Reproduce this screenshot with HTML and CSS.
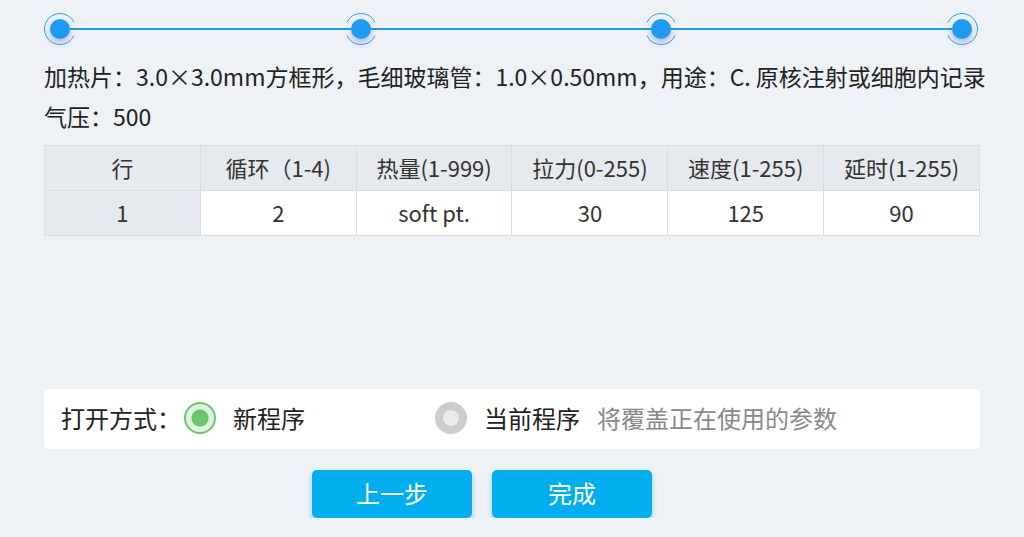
FILE: index.html
```html
<!DOCTYPE html>
<html lang="zh-CN">
<head>
  <meta charset="UTF-8" />
  <title>拉制程序</title>
  <link rel="stylesheet" href="styles.css">
</head>
<body>
  <div class="stepper">
    <div class="step">
      <svg class="ring" viewBox="0 0 32 32"><path d="M30.04 22.55 A15.5 15.5 0 1 1 30.04 9.45" /></svg>
    </div>
    <div class="bar"></div>
    <div class="step">
      <svg class="ring" viewBox="0 0 32 32"><path d="M1.96 9.45 A15.5 15.5 0 0 1 30.04 9.45" /><path d="M30.04 22.55 A15.5 15.5 0 0 1 1.96 22.55" /></svg>
    </div>
    <div class="bar"></div>
    <div class="step">
      <svg class="ring" viewBox="0 0 32 32"><path d="M1.96 9.45 A15.5 15.5 0 0 1 30.04 9.45" /><path d="M30.04 22.55 A15.5 15.5 0 0 1 1.96 22.55" /></svg>
    </div>
    <div class="bar"></div>
    <div class="step">
      <svg class="ring" viewBox="0 0 32 32"><path d="M1.96 9.45 A15.5 15.5 0 1 1 1.96 22.55" /></svg>
    </div>
  </div>

  <div class="content">
    <p class="desc">加热片：3.0×3.0mm方框形，毛细玻璃管：1.0×0.50mm，用途：C. 原核注射或细胞内记录</p>
    <p class="desc">气压：500</p>

    <table class="params">
      <tr>
        <th>行</th>
        <th>循环（1-4)</th>
        <th>热量(1-999)</th>
        <th>拉力(0-255)</th>
        <th>速度(1-255)</th>
        <th>延时(1-255)</th>
      </tr>
      <tr>
        <td class="row-no">1</td>
        <td>2</td>
        <td>soft pt.</td>
        <td>30</td>
        <td>125</td>
        <td>90</td>
      </tr>
    </table>

    <div class="open-mode">
      <span class="label">打开方式：</span>
      <label class="option first">
        <span class="radio checked"></span>新程序
      </label>
      <label class="option">
        <span class="radio"></span>当前程序
        <span class="hint">将覆盖正在使用的参数</span>
      </label>
    </div>

    <div class="actions">
      <button class="btn">上一步</button>
      <button class="btn">完成</button>
    </div>
  </div>
</body>
</html>
```

FILE: styles.css
```css
body {
  margin: 0;
  background-color: #eef2f6;
  color: #222;
  font-family: "Noto Sans CJK SC", "Noto Sans", sans-serif;
}
.stepper {
  display: flex;
  align-items: center;
  padding: 19px 52px 0 50px;
}
.step {
  position: relative;
  width: 20px;
  height: 20px;
  border-radius: 50%;
  background-color: #1e9bf0;
  box-shadow: 0 4px 6px rgba(70, 80, 190, 0.35);
  flex: none;
}
.ring {
  position: absolute;
  left: -6px;
  top: -6px;
  width: 32px;
  height: 32px;
  fill: none;
  stroke: #2a9eee;
  stroke-width: 1;
}
.bar {
  flex: 1;
  height: 2px;
  background-color: #1e9be9;
}
.content {
  padding: 0 44px;
}
.desc {
  margin: 0;
  font-size: 23px;
  line-height: 40px;
  white-space: nowrap;
}
.desc:first-child {
  margin-top: 17px;
}
.params {
  width: 100%;
  margin-top: 9px;
  border-collapse: collapse;
  table-layout: fixed;
  font-size: 22px;
  line-height: 30px;
  color: #333;
}
.params th, .params td {
  height: 42px;
  padding: 0 0 2px;
  border: 1px solid #d9dce1;
  text-align: center;
  font-weight: normal;
}
.params th, .params .row-no {
  background-color: #e6e9ed;
}
.params td {
  background-color: #fff;
}
.open-mode {
  display: flex;
  align-items: center;
  box-sizing: border-box;
  height: 60px;
  margin-top: 153px;
  padding: 0 17px 3px;
  background-color: #fff;
  border-radius: 6px;
  font-size: 24px;
}
.option {
  display: flex;
  align-items: center;
  gap: 17px;
}
.option.first {
  width: 251px;
  margin-left: 3px;
}
.radio {
  box-sizing: border-box;
  width: 32px;
  height: 32px;
  border-radius: 50%;
  border: 8px solid #cccccc;
  background-color: #ebebeb;
}
.radio.checked {
  border: 2px solid #6cc46c;
  background: radial-gradient(circle, #6cc46c 0 8px, #dff2df 9px);
}
.hint {
  color: #888;
}
.actions {
  display: flex;
  justify-content: center;
  gap: 20px;
  margin-top: 21px;
  padding-right: 60px;
}
.btn {
  width: 160px;
  height: 48px;
  padding: 0 0 3px;
  border: none;
  border-radius: 5px;
  background-color: #03aeef;
  color: #fff;
  font-family: inherit;
  font-size: 24px;
  box-shadow: 0 3px 6px rgba(3, 150, 230, 0.35);
}
```
